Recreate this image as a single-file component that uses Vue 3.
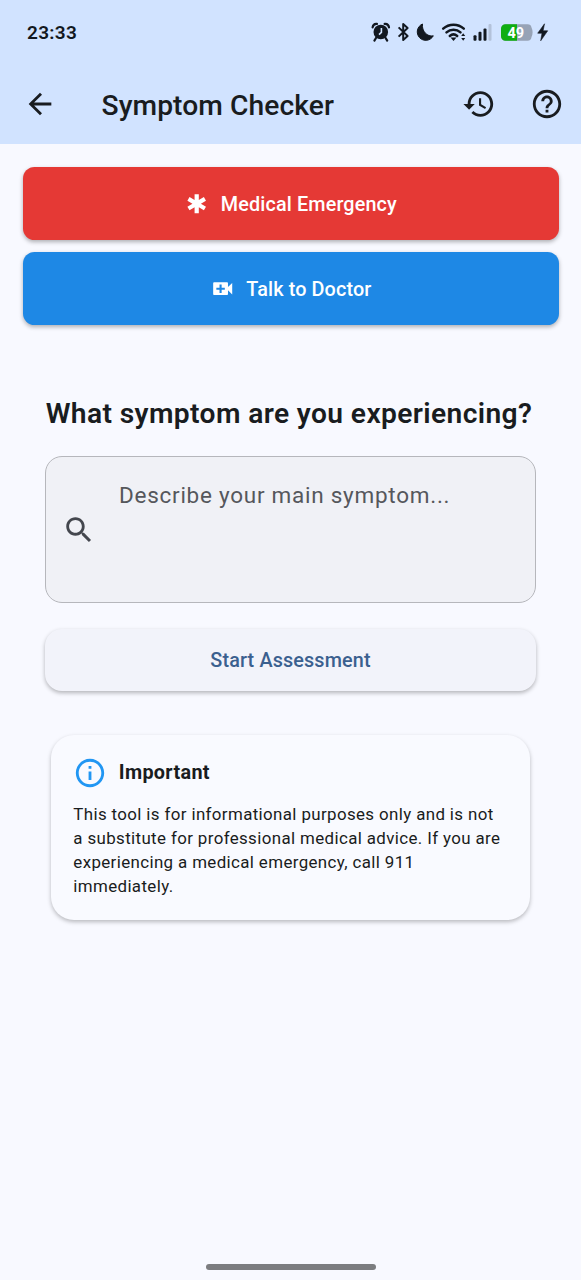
<script setup>
const notice = [
  'This tool is for informational purposes only and is not',
  'a substitute for professional medical advice. If you are',
  'experiencing a medical emergency, call 911',
  'immediately.',
]
</script>

<template>
  <div class="screen">
    <header class="top">
      <div class="status">
        <span class="clock">23:33</span>
        <svg class="tray" width="180" height="22" viewBox="0 0 180 22" fill="#121820">
          <circle cx="10.8" cy="11" r="7.3" />
          <path d="M2.6 6.4C3 3.8 4.8 2.6 7 2.9M19 6.4C18.6 3.8 16.800 2.6 14.6 2.9M6 17l-1.600 2.6M15.6 17l1.6 2.6" stroke="#121820" stroke-width="2.2" stroke-linecap="round" fill="none" />
          <path d="M11.4 7v4.300L9 13.600" stroke="#d1e3ff" stroke-width="1.600" fill="none" />
          <path d="M28.600 6.400l9 8.600-4.400 4V3l4.400 4-9 8.600" stroke="#121820" stroke-width="2" fill="none" stroke-linejoin="round" />
          <path d="M52.500 3a8.500 8.500 0 1 0 10.800 11.800c-5.800 1.400-11.800-4.600-10.800-11.800z" stroke="#121820" stroke-linejoin="round" />
          <g fill="none" stroke="#121820" stroke-width="2.500" stroke-linecap="round">
            <path d="M73.200 7.600c5.800-5.300 14.800-5.300 20.600 0" />
            <path d="M76.500 11.400c4-3.600 10-3.600 14 0" />
            <path d="M79.800 15c2.200-1.900 5.200-1.900 7.400 0" />
          </g>
          <path d="M80.500 16.500h6l-3 3.500z" />
          <path d="M91.200 15l2-2.800 2 2.800zM91.200 17h4l-2 2.800z" />
          <rect x="103.500" y="14.300" width="3" height="5.400" rx="1" />
          <rect x="108.500" y="10.800" width="3" height="8.900" rx="1" />
          <rect x="113.500" y="7.500" width="3" height="12.200" rx="1" />
          <rect x="118.500" y="3" width="3" height="16.700" rx="1" fill="#b3c2da" />
          <path d="M135.500 3.300h22a4 4 0 0 1 4 3.200q2.200 4.800 0 9.600a4 4 0 0 1-4 3.700h-22a4.500 4.500 0 0 1-4.500-4.500V7.800a4.500 4.500 0 0 1 4.500-4.500z" fill="#97a3b6" />
          <path d="M135.500 3.300h11.500v16.500h-11.500a4.500 4.500 0 0 1-4.500-4.500V7.800a4.500 4.500 0 0 1 4.500-4.500z" fill="#0fae12" />
          <text x="145.800" y="16.600" text-anchor="middle" class="level">49</text>
          <path d="M174.500 2.800l-6.800 9.400h4.300l-1.300 7.600 7-10h-4.600z" stroke="#121820" stroke-width=".6" />
        </svg>
      </div>
      <div class="bar">
        <svg class="ico" viewBox="0 0 24 24"><path d="M20 11H7.830l5.590-5.590L12 4l-8 8 8 8 1.410-1.410L7.830 13H20v-2z" /></svg>
        <h1>Symptom Checker</h1>
        <svg class="ico" viewBox="0 0 24 24"><path d="M13 3c-4.970 0-9 4.030-9 9H1l3.890 3.890.070.140L9 12H6c0-3.870 3.130-7 7-7s7 3.130 7 7-3.130 7-7 7c-1.930 0-3.680-.790-4.940-2.060l-1.420 1.420C8.270 19.990 10.510 21 13 21c4.970 0 9-4.030 9-9s-4.030-9-9-9zm-1 5v5l4.280 2.540.720-1.210-3.500-2.080V8H12z" /></svg>
        <svg class="ico help" viewBox="0 0 24 24"><path d="M11 18h2v-2h-2v2zm1-16C6.480 2 2 6.480 2 12s4.480 10 10 10 10-4.480 10-10S17.520 2 12 2zm0 18c-4.410 0-8-3.590-8-8s3.590-8 8-8 8 3.590 8 8-3.590 8-8 8zm0-14c-2.210 0-4 1.790-4 4h2c0-1.100.900-2 2-2s2 .900 2 2c0 2-3 1.750-3 5h2c0-2.250 3-2.500 3-5 0-2.210-1.790-4-4-4z" /></svg>
      </div>
    </header>

    <section class="actions">
      <button class="act red">
        <svg class="small" viewBox="0 0 24 24"><path d="M20.790 9.230l-2-3.460L14 8.540V3h-4v5.540L5.210 5.770l-2 3.460L8 12l-4.790 2.770 2 3.460L10 15.460V21h4v-5.540l4.790 2.770 2-3.460L16 12z" /></svg>
        <span>Medical Emergency</span>
      </button>
      <button class="act blue">
        <svg class="small" viewBox="0 0 24 24"><path d="M17 10.500V7c0-.550-.450-1-1-1H4c-.550 0-1 .450-1 1v10c0 .550.450 1 1 1h12c.550 0 1-.450 1-1v-3.500l4 4v-11l-4 4zM14 13h-3v3H9v-3H6v-2h3V8h2v3h3v2z" /></svg>
        <span>Talk to Doctor</span>
      </button>
    </section>

    <main>
      <h2>What symptom are you experiencing?</h2>
      <div class="field">
        <svg class="ico" viewBox="0 0 24 24"><path d="M15.500 14h-.790l-.280-.270C15.410 12.590 16 11.110 16 9.500 16 5.910 13.090 3 9.500 3S3 5.910 3 9.500 5.910 16 9.500 16c1.610 0 3.090-.590 4.230-1.570l.270.280v.790l5 4.990L20.490 19l-4.990-5zm-6 0C7.010 14 5 11.990 5 9.500S7.010 5 9.500 5 14 7.010 14 9.500 11.990 14 9.500 14z" /></svg>
        <span class="hint">Describe your main symptom...</span>
      </div>
      <button class="start">Start Assessment</button>
      <article class="note">
        <div class="head">
          <svg class="ico" viewBox="0 0 24 24"><path d="M11 7h2v2h-2zm0 4h2v6h-2zm1-9C6.480 2 2 6.480 2 12s4.480 10 10 10 10-4.480 10-10S17.520 2 12 2zm0 18c-4.410 0-8-3.590-8-8s3.590-8 8-8 8 3.590 8 8-3.590 8-8 8z" /></svg>
          <h3>Important</h3>
        </div>
        <p><span v-for="line in notice" :key="line">{{ line }}</span></p>
      </article>
    </main>
    <footer><i class="pill"></i></footer>
  </div>
</template>

<style scoped>
.screen { width: 581px; height: 1280px; display: flex; flex-direction: column; background: #f8f9ff; font-family: Roboto, sans-serif; color: #191c20; overflow: hidden; }
.top { height: 144px; background: #d1e3ff; flex: none; }
.status { height: 64px; display: flex; align-items: center; justify-content: space-between; padding: 0 31px 0 27px; }
.clock { font-size: 19px; font-weight: 600; letter-spacing: .3px; color: #121820; }
.level { font: 700 14.500px Roboto, sans-serif; fill: #fff; }
.bar { height: 80px; display: flex; align-items: center; padding: 0 17px 0 23px; }
.ico { width: 34px; height: 34px; flex: none; fill: currentColor; display: block; }
h1 { flex: 1; margin: 0 0 0 44.500px; padding-top: 3px; font-size: 28.200px; font-weight: 500; line-height: 36px; letter-spacing: .080px; white-space: nowrap; }
.help { margin-left: 34px; }
.actions { padding: 22.500px 22.500px 0; display: flex; flex-direction: column; gap: 11.500px; }
button { border: 0; padding: 0; font-family: inherit; display: flex; align-items: center; justify-content: center; white-space: nowrap; }
.act { height: 73.500px; border-radius: 11.500px; gap: 11.300px; color: #fff; font-size: 19.800px; font-weight: 500; letter-spacing: .14px; box-shadow: 0 2px 4px rgba(0,0,0,.3); }
.act span { padding-top: 2px; }
.red { background: #e53935; }
.blue { background: #1e88e5; }
.small { width: 25.400px; height: 25.400px; fill: #fff; }
main { flex: 1; padding: 70px 45px 0; }
h2 { margin: 0 3px 0 0; font-size: 28.200px; font-weight: 600; line-height: 37px; letter-spacing: .380px; text-align: center; white-space: nowrap; }
.field { margin-top: 24px; height: 147px; box-sizing: border-box; border: 1.400px solid #b6b7bc; border-radius: 17px; background: #f0f1f6; display: flex; align-items: center; padding-left: 16px; color: #44474e; }
.hint { margin-left: 23px; align-self: flex-start; margin-top: 20.500px; font-size: 22.500px; line-height: 34px; letter-spacing: .74px; color: #55575c; }
.start { margin-top: 26px; width: 491px; height: 61.500px; padding-top: 1px; border-radius: 17px; background: #f2f3fa; color: #3b608f; font-size: 19.800px; font-weight: 500; letter-spacing: .14px; box-shadow: 0 2px 4px rgba(0,0,0,.28); }
.note { margin: 44px 6px 0 5.500px; height: 185px; box-sizing: border-box; padding: 21.300px 22.800px; border-radius: 23px; background: #f9faff; box-shadow: 0 2px 4px rgba(0,0,0,.26); }
.head { display: flex; align-items: center; }
.head .ico { color: #2196f3; }
h3 { margin: 0 0 0 11.500px; padding-top: 1px; font-size: 19.800px; line-height: 28px; font-weight: 700; letter-spacing: .340px; }
.note p { margin: 12px 0 0; font-size: 16.900px; line-height: 24.150px; letter-spacing: .375px; white-space: nowrap; }
.note p span { display: block; }
footer { height: 16px; display: flex; justify-content: center; align-items: flex-start; }
.pill { width: 170px; height: 6px; border-radius: 3px; background: #7c7d80; }
</style>
